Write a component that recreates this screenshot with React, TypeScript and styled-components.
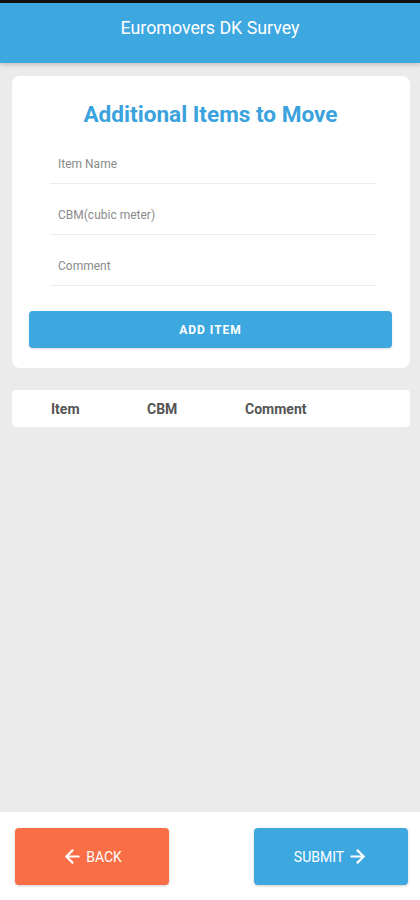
import React from "react";
import styled, { createGlobalStyle } from "styled-components";
import { ArrowLeft, ArrowRight } from "lucide-react";

const GlobalStyle = createGlobalStyle`
  * { box-sizing: border-box; }
  body {
    margin: 0;
    background: #ebebeb;
    font-family: Roboto, "Liberation Sans", sans-serif;
  }
`;

const Page = styled.div`
  display: flex;
  flex-direction: column;
  min-height: 900px;
  background: #ebebeb;
`;

const StatusStrip = styled.div`
  height: 3px;
  background: #111;
`;

const Header = styled.header`
  height: 60px;
  display: flex;
  align-items: center;
  justify-content: center;
  padding-bottom: 11px;
  background: #3da7e0;
  color: #fff;
  font-size: 17.8px;
  box-shadow: 0 2px 4px rgba(0, 0, 0, 0.18);
  position: relative;
  z-index: 1;
`;

const Main = styled.main`
  flex: 1;
  padding: 13px 10px 0 12px;
`;

const Card = styled.section`
  background: #fff;
  border-radius: 8px;
  padding: 25px 18px 20px 17px;
`;

const Title = styled.h1`
  margin: 0 0 4px;
  text-align: center;
  font-size: 22.6px;
  line-height: 28px;
  font-weight: 700;
  color: #3aa2dc;
`;

const Fields = styled.div`
  margin: 0 17px 25px 21px;
`;

const Field = styled.div`
  height: 51px;
  display: flex;
  align-items: flex-end;
  padding: 0 0 11px 8px;
  border-bottom: 1px solid #ececec;
  font-size: 12px;
  line-height: 16px;
  color: #8a8a8a;
`;

const AddButton = styled.button`
  display: block;
  width: 100%;
  height: 37px;
  border: none;
  border-radius: 4px;
  background: #3da7e0;
  color: #fff;
  font-family: inherit;
  font-size: 12px;
  font-weight: 700;
  letter-spacing: 1px;
  box-shadow: 0 1px 2px rgba(0, 0, 0, 0.15);
`;

const TableHead = styled.div`
  margin-top: 22px;
  height: 37px;
  display: grid;
  grid-template-columns: 96px 98px auto;
  align-items: center;
  padding-left: 39px;
  background: #fff;
  border-radius: 4px;
  font-size: 14px;
  font-weight: 700;
  color: #555;
`;

const Footer = styled.footer`
  height: 88px;
  display: flex;
  justify-content: space-between;
  padding: 16px 12px 15px 15px;
  background: #fff;
`;

const NavButton = styled.button<{ $tone: string }>`
  width: 154px;
  height: 57px;
  display: flex;
  align-items: center;
  justify-content: center;
  gap: 3px;
  border: none;
  border-radius: 4px;
  background: ${(p) => p.$tone};
  color: #fff;
  font-family: inherit;
  font-size: 14px;
  box-shadow: 0 1px 3px rgba(0, 0, 0, 0.2);
`;

export default function App() {
  return (
    <>
      <GlobalStyle />
      <Page>
        <StatusStrip />
        <Header>Euromovers DK Survey</Header>
        <Main>
          <Card>
            <Title>Additional Items to Move</Title>
            <Fields>
              <Field>Item Name</Field>
              <Field>CBM(cubic meter)</Field>
              <Field>Comment</Field>
            </Fields>
            <AddButton>ADD ITEM</AddButton>
          </Card>
          <TableHead>
            <span>Item</span>
            <span>CBM</span>
            <span>Comment</span>
          </TableHead>
        </Main>
        <Footer>
          <NavButton $tone="#fa6e45">
            <ArrowLeft size={21} strokeWidth={2.5} />
            BACK
          </NavButton>
          <NavButton $tone="#3da7e0">
            SUBMIT
            <ArrowRight size={21} strokeWidth={2.5} />
          </NavButton>
        </Footer>
      </Page>
    </>
  );
}
